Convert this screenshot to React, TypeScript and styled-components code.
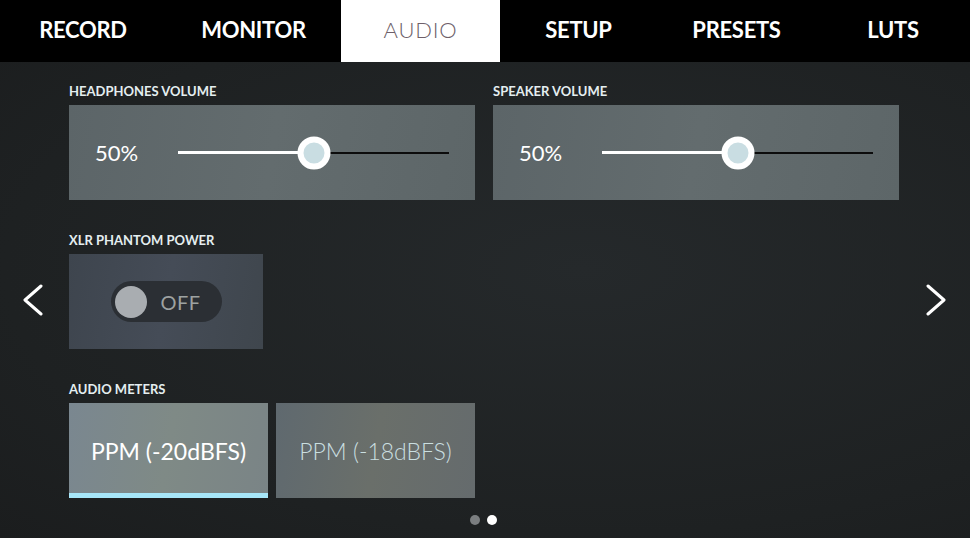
import React from 'react';
import styled, {createGlobalStyle} from 'styled-components';

const tabs = [
    {label: 'RECORD', width: '166px'},
    {label: 'MONITOR', width: '175px'},
    {label: 'AUDIO', width: '159px', active: true},
    {label: 'SETUP', width: '157px'},
    {label: 'PRESETS', width: '159px'},
    {label: 'LUTS', width: '154px'},
];

const GlobalStyle = createGlobalStyle`
  * {
    box-sizing: border-box;
  }

  body {
    margin: 0;
    font-family: Lato, "Open Sans", sans-serif;
    background: #1f2324;
  }
`

const Volume = ({title, value}: { title: string, value: number }) => (
    <Field>
        <Label>{title}</Label>
        <SliderPanel>
            <Value>{value}%</Value>
            <Track>
                <TrackFill style={{width: `${value}%`}}/>
                <Knob style={{left: `${value}%`}}/>
            </Track>
        </SliderPanel>
    </Field>
);

export default function App() {
    return (
        <>
            <GlobalStyle/>
            <Screen>
                <TabBar>
                    {tabs.map(tab => (
                        <Tab key={tab.label} $active={tab.active} $width={tab.width}>{tab.label}</Tab>
                    ))}
                </TabBar>
                <Body>
                    <Arrow $side="left">
                        <svg width="22" height="32" viewBox="0 0 22 32">
                            <polyline points="19,2 3,16 19,30" fill="none" stroke="#fff" strokeWidth="3"
                                      strokeLinecap="round" strokeLinejoin="round"/>
                        </svg>
                    </Arrow>
                    <Content>
                        <Row>
                            <Volume title="HEADPHONES VOLUME" value={50}/>
                            <Volume title="SPEAKER VOLUME" value={50}/>
                        </Row>
                        <Field>
                            <Label>XLR PHANTOM POWER</Label>
                            <TogglePanel>
                                <Toggle>
                                    <ToggleDot/>
                                    <ToggleText>OFF</ToggleText>
                                </Toggle>
                            </TogglePanel>
                        </Field>
                        <Field>
                            <Label>AUDIO METERS</Label>
                            <Options>
                                <Option $active>PPM (-20dBFS)</Option>
                                <Option>PPM (-18dBFS)</Option>
                            </Options>
                        </Field>
                    </Content>
                    <Arrow $side="right">
                        <svg width="22" height="32" viewBox="0 0 22 32">
                            <polyline points="3,2 19,16 3,30" fill="none" stroke="#fff" strokeWidth="3"
                                      strokeLinecap="round" strokeLinejoin="round"/>
                        </svg>
                    </Arrow>
                </Body>
                <Dots>
                    <Dot/>
                    <Dot $active/>
                </Dots>
            </Screen>
        </>
    );
}

const Screen = styled.div`
  width: 970px;
  height: 538px;
  display: flex;
  flex-direction: column;
  overflow: hidden;
  background: radial-gradient(ellipse at 60% 50%, #25292b 0%, #1e2122 70%, #1b1d1e 100%);
`

const TabBar = styled.nav`
  display: flex;
  height: 62px;
  background: #000;
`

const Tab = styled.div<{ $active?: boolean, $width: string }>`
  width: ${p => p.$width};
  display: flex;
  align-items: center;
  justify-content: center;
  padding-bottom: 4px;
  font-size: 22px;
  font-weight: ${p => p.$active ? 300 : 700};
  letter-spacing: ${p => p.$active ? '0.8px' : '-0.3px'};
  color: ${p => p.$active ? '#6e5f6a' : '#fff'};
  background: ${p => p.$active ? '#fff' : 'transparent'};
`

const Body = styled.div`
  display: flex;
  align-items: flex-start;
  padding-top: 22px;
`

const Arrow = styled.div<{ $side: 'left' | 'right' }>`
  width: ${p => p.$side === 'left' ? '69px' : '70px'};
  display: flex;
  margin-top: 200px;
  padding-left: ${p => p.$side === 'left' ? '22px' : '25px'};
`

const Content = styled.div`
  display: flex;
  flex-direction: column;
  gap: 33px;
  width: 831px;
`

const Row = styled.div`
  display: flex;
  gap: 18px;
`

const Field = styled.div`
  display: flex;
  flex-direction: column;
  gap: 7px;
`

const Label = styled.div`
  font-size: 13px;
  font-weight: 700;
  color: #e4eef0;
  line-height: 14px;
`

const Panel = styled.div`
  height: 95px;
  background: linear-gradient(100deg, #5c6568 0%, #636c6e 50%, #5d6668 100%);
`

const SliderPanel = styled(Panel)`
  width: 406px;
  display: flex;
  align-items: center;
  padding: 0 26px 0 26px;
`

const Value = styled.div`
  width: 83px;
  font-size: 22px;
  color: #fff;
`

const Track = styled.div`
  position: relative;
  flex: 1;
  height: 2px;
  background: #0c0c0c;
`

const TrackFill = styled.div`
  height: 3px;
  margin-top: -1px;
  background: #fff;
`

const Knob = styled.div`
  position: absolute;
  top: 50%;
  width: 33px;
  height: 33px;
  border-radius: 50%;
  border: 6px solid #fff;
  background: #c9dde2;
  transform: translate(-50%, -50%);
`

const TogglePanel = styled(Panel)`
  width: 194px;
  display: flex;
  align-items: center;
  justify-content: center;
  background: linear-gradient(100deg, #3e454e 0%, #454c57 50%, #3f464d 100%);
`

const Toggle = styled.div`
  width: 111px;
  height: 41px;
  border-radius: 21px;
  background: #2b2f34;
  display: flex;
  align-items: center;
  gap: 14px;
  padding-left: 4px;
`

const ToggleDot = styled.div`
  width: 32px;
  height: 32px;
  border-radius: 50%;
  background: #a9adb1;
`

const ToggleText = styled.span`
  font-size: 20px;
  color: #9ea2a1;
  letter-spacing: 0.5px;
`

const Options = styled.div`
  display: flex;
  gap: 8px;
`

const Option = styled.div<{ $active?: boolean }>`
  width: 199px;
  height: 95px;
  display: flex;
  align-items: center;
  justify-content: center;
  font-size: 23px;
  color: ${p => p.$active ? '#fff' : '#cadfe0'};
  font-weight: ${p => p.$active ? 400 : 300};
  background: ${p => p.$active
          ? 'linear-gradient(100deg, #7a8790 0%, #7f8a86 50%, #7a8486 100%)'
          : 'linear-gradient(100deg, #5f696f 0%, #6a6f6a 50%, #656b6d 100%)'};
  border-bottom: ${p => p.$active ? '5px solid #a7e6f8' : 'none'};
  padding-top: ${p => p.$active ? '5px' : '0'};
`

const Dots = styled.div`
  display: flex;
  justify-content: center;
  gap: 7px;
  padding-top: 17px;
  margin-left: -3px;
`

const Dot = styled.div<{ $active?: boolean }>`
  width: 10px;
  height: 10px;
  border-radius: 50%;
  background: ${p => p.$active ? '#fff' : '#7b7e80'};
`
